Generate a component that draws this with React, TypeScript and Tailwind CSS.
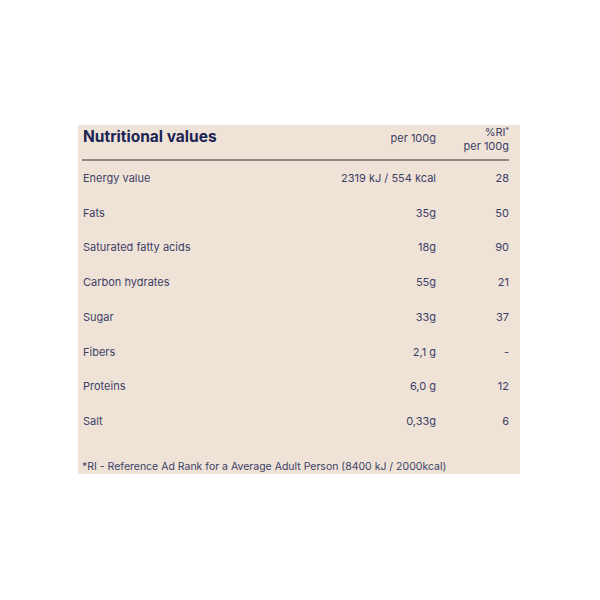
const rows: [string, string, string][] = [
  ["Energy value", "2319 kJ / 554 kcal", "28"],
  ["Fats", "35g", "50"],
  ["Saturated fatty acids", "18g", "90"],
  ["Carbon hydrates", "55g", "21"],
  ["Sugar", "33g", "37"],
  ["Fibers", "2,1 g", "-"],
  ["Proteins", "6,0 g", "12"],
  ["Salt", "0,33g", "6"],
];

export default function App() {
  return (
    <div
      className="w-[600px] h-[600px] bg-white pt-[125px] pl-[78px]"
      style={{ fontFamily: "Inter, 'Open Sans', sans-serif" }}
    >
      <div className="w-[442px] h-[349px] bg-[#efe3d7] pl-[4px] pr-[11px] text-[#3c4166] text-[11px]">
        {/* Header */}
        <div className="flex items-start h-[36px] border-b-2 border-[#8f8a86]">
          <div className="flex-1 pl-[1px] pt-[2px] leading-[20px] text-[15.5px] font-bold text-[#1c2454]">
            Nutritional values
          </div>
          <div className="w-[120px] text-right pt-[6px] leading-[14px]">per 100g</div>
          <div className="w-[73px] text-right leading-[14px]">
            <div>
              %RI<sup className="text-[7px] relative -top-[3px]">*</sup>
            </div>
            <div>per 100g</div>
          </div>
        </div>

        {/* Rows */}
        {rows.map(([label, value, ri]) => (
          <div key={label} className="flex items-center h-[34.7px]">
            <div className="flex-1 pl-[1px]">{label}</div>
            <div className="w-[140px] text-right">{value}</div>
            <div className="w-[73px] text-right">{ri}</div>
          </div>
        ))}

        {/* Footnote */}
        <div className="pt-[20px] text-[10.5px] leading-[16px]">
          *RI - Reference Ad Rank for a Average Adult Person (8400 kJ / 2000kcal)
        </div>
      </div>
    </div>
  );
}
